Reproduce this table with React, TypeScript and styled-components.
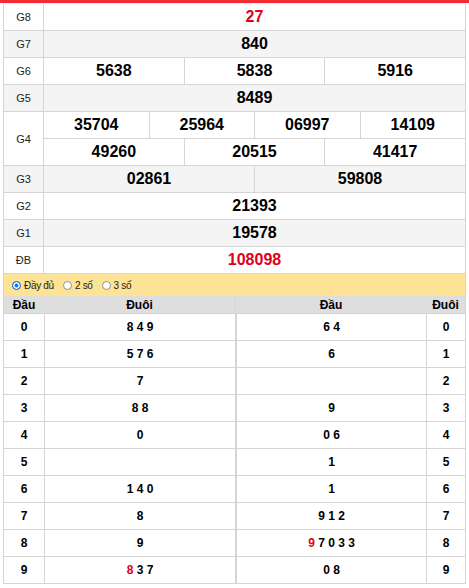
import React from "react";
import styled, { createGlobalStyle } from "styled-components";

const Global = createGlobalStyle`
  html, body { margin: 0; padding: 0; background: #fff; }
  body { font-family: "Liberation Sans", Arial, sans-serif; color: #000; }
  * { box-sizing: border-box; }
`;

const BORDER = "#d5d5d5";
const RED = "#e2001a";

const Page = styled.div`
  width: 469px;
`;

const TopBar = styled.div`
  height: 3px;
  background: #f22b32;
`;

const Board = styled.div`
  margin: 0 3px;
  border-top: 1px solid #f0f0f0;
  border-left: 1px solid ${BORDER};
  border-right: 1px solid ${BORDER};
`;

const PrizeRow = styled.div<{ $alt?: boolean }>`
  display: flex;
  background: ${(p) => (p.$alt ? "#f4f4f4" : "#fff")};
  border-bottom: 1px solid ${BORDER};
`;

const Label = styled.div`
  width: 40px;
  flex: none;
  border-right: 1px solid ${BORDER};
  display: flex;
  align-items: center;
  justify-content: center;
  font-size: 11px;
  color: #222;
`;

const Values = styled.div`
  flex: 1;
  display: flex;
  flex-direction: column;
`;

const SubRow = styled.div`
  display: flex;
  height: 26px;
  & + & {
    border-top: 1px solid ${BORDER};
    height: 27px;
  }
`;

const Num = styled.div<{ $red?: boolean }>`
  flex: 1 1 0;
  display: flex;
  align-items: center;
  justify-content: center;
  font-size: 16px;
  font-weight: bold;
  color: ${(p) => (p.$red ? RED : "#000")};
  & + & {
    border-left: 1px solid ${BORDER};
  }
`;

const RadioBar = styled.div`
  height: 22px;
  background: #fde396;
  display: flex;
  align-items: center;
  gap: 9px;
  padding-left: 8px;
`;

const RadioLabel = styled.label`
  display: flex;
  align-items: center;
  gap: 3px;
  font-size: 10px;
  letter-spacing: -0.3px;
  color: #222;
`;

const Radio = styled.span<{ $on?: boolean }>`
  width: 9px;
  height: 9px;
  border-radius: 50%;
  border: 1px solid ${(p) => (p.$on ? "#1a73e8" : "#8f8f8f")};
  background: ${(p) => (p.$on ? "#1a73e8" : "#fff")};
  box-shadow: ${(p) => (p.$on ? "inset 0 0 0 1.5px #fff" : "none")};
`;

const Loto = styled.div`
  display: grid;
  grid-template-columns: 40px 191px 191px 1fr;
`;

const Head = styled.div<{ $mid?: boolean }>`
  height: 18px;
  background: #dedede;
  display: flex;
  align-items: center;
  justify-content: center;
  font-size: 12px;
  font-weight: bold;
  border-bottom: 1px solid ${BORDER};
  border-left: ${(p) => (p.$mid ? `1px solid ${BORDER}` : "0")};
`;

const Cell = styled.div<{ $left?: boolean; $thick?: boolean }>`
  height: 27px;
  display: flex;
  align-items: center;
  justify-content: center;
  font-size: 12px;
  font-weight: bold;
  border-bottom: 1px solid ${BORDER};
  border-left: ${(p) => (p.$thick ? `2px solid ${BORDER}` : p.$left ? `1px solid ${BORDER}` : "0")};
  white-space: pre;
`;

const Red = styled.span`
  color: ${RED};
`;

type Tail = { red?: string; rest: string };

const prizes: { label: string; rows: string[][]; red?: boolean }[] = [
  { label: "G8", rows: [["27"]], red: true },
  { label: "G7", rows: [["840"]] },
  { label: "G6", rows: [["5638", "5838", "5916"]] },
  { label: "G5", rows: [["8489"]] },
  { label: "G4", rows: [["35704", "25964", "06997", "14109"], ["49260", "20515", "41417"]] },
  { label: "G3", rows: [["02861", "59808"]] },
  { label: "G2", rows: [["21393"]] },
  { label: "G1", rows: [["19578"]] },
  { label: "ĐB", rows: [["108098"]], red: true },
];

const leftTails: Tail[] = [
  { rest: "8 4 9" },
  { rest: "5 7 6" },
  { rest: "7" },
  { rest: "8 8" },
  { rest: "0" },
  { rest: "" },
  { rest: "1 4 0" },
  { rest: "8" },
  { rest: "9" },
  { red: "8", rest: " 3 7" },
];

const rightHeads: Tail[] = [
  { rest: "6 4" },
  { rest: "6" },
  { rest: "" },
  { rest: "9" },
  { rest: "0 6" },
  { rest: "1" },
  { rest: "1" },
  { rest: "9 1 2" },
  { red: "9", rest: " 7 0 3 3" },
  { rest: "0 8" },
];

const renderTail = (t: Tail) => (
  <>
    {t.red && <Red>{t.red}</Red>}
    {t.rest}
  </>
);

export default function App() {
  return (
    <Page>
      <Global />
      <TopBar />
      <Board>
        {prizes.map((p, i) => (
          <PrizeRow key={p.label} $alt={i % 2 === 1}>
            <Label>{p.label}</Label>
            <Values>
              {p.rows.map((r, j) => (
                <SubRow key={j}>
                  {r.map((n) => (
                    <Num key={n} $red={p.red}>
                      {n}
                    </Num>
                  ))}
                </SubRow>
              ))}
            </Values>
          </PrizeRow>
        ))}
        <RadioBar>
          <RadioLabel>
            <Radio $on />
            Đầy đủ
          </RadioLabel>
          <RadioLabel>
            <Radio />2 số
          </RadioLabel>
          <RadioLabel>
            <Radio />3 số
          </RadioLabel>
        </RadioBar>
        <Loto>
          <Head>Đầu</Head>
          <Head>Đuôi</Head>
          <Head $mid>Đầu</Head>
          <Head>Đuôi</Head>
          {leftTails.map((t, i) => (
            <React.Fragment key={i}>
              <Cell>{i}</Cell>
              <Cell $left>{renderTail(t)}</Cell>
              <Cell $thick>{renderTail(rightHeads[i])}</Cell>
              <Cell $left>{i}</Cell>
            </React.Fragment>
          ))}
        </Loto>
      </Board>
    </Page>
  );
}
